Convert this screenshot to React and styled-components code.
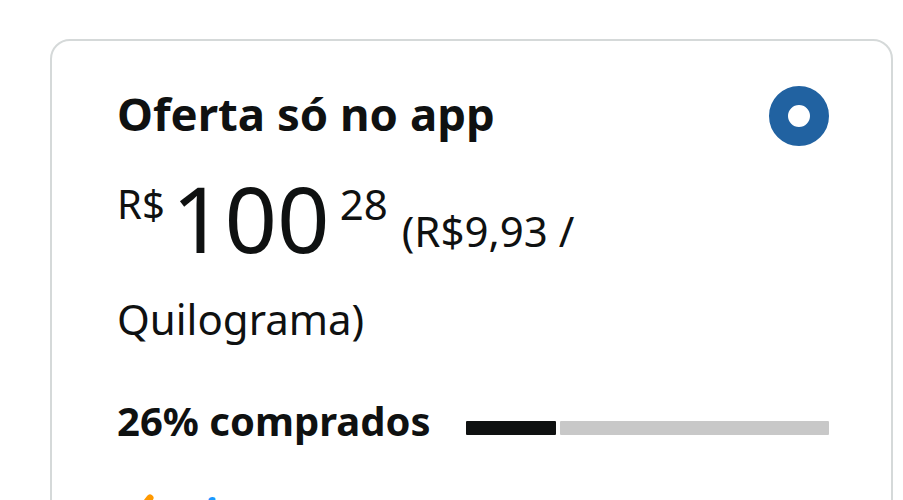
import React from 'react'
import styled, { createGlobalStyle } from 'styled-components'

const Global = createGlobalStyle`
  body {
    margin: 0;
    background: #fff;
    font-family: "Noto Sans", "Open Sans", sans-serif;
    color: #0f1111;
    overflow: hidden;
  }
`

const Page = styled.div`
  padding: 39px 10px 0 50px;
  height: 500px;
  box-sizing: border-box;
`

const Card = styled.div`
  border: 2px solid #d5d9d9;
  border-radius: 20px;
  padding: 39px 62px 0 65px;
  height: 600px;
  box-sizing: border-box;
`

const Header = styled.div`
  display: flex;
  justify-content: space-between;
  align-items: center;
`

const Title = styled.h2`
  margin: 0;
  font-size: 45.5px;
  font-weight: 700;
  line-height: 60px;
`

const Radio = styled.span`
  width: 60px;
  height: 60px;
  margin-top: 6px;
  border-radius: 50%;
  box-sizing: border-box;
  border: 19px solid #2162a1;
  background: #fff;
`

const Price = styled.div`
  max-width: 480px;
  margin-top: 17px;
  font-size: 42px;
  line-height: 82px;
`

const Symbol = styled.span`
  font-size: 40px;
  vertical-align: 34px;
  margin-right: 7px;
`

const Whole = styled.span`
  font-size: 92px;
  line-height: 92px;
`

const Cents = styled.span`
  font-size: 42px;
  vertical-align: 33px;
  margin: 0 14px 0 10px;
`

const Unit = styled.span`
  font-size: 42px;
  vertical-align: 6px;
`

const Claimed = styled.div`
  display: flex;
  align-items: center;
  gap: 35px;
  margin-top: 31px;
`

const ClaimedLabel = styled.span`
  font-size: 40px;
  font-weight: 700;
  line-height: 48px;
  white-space: nowrap;
`

const Track = styled.div`
  flex: 1;
  display: flex;
  gap: 4px;
  height: 14px;
  margin-top: 14px;
`

const Fill = styled.div`
  background: #0f1111;
  border-radius: 1px;
`

const Rest = styled.div`
  flex: 1;
  background: #c8c8c8;
  border-radius: 1px;
`

const Prime = styled.div`
  margin-top: 46px;
  display: flex;
  align-items: flex-start;
  gap: 4px;
  font-size: 42px;
  font-weight: 700;
  color: #1a98ff;
  font-style: italic;
  line-height: 1;

  svg {
    margin-top: 3px;
  }
`

const pct = 25

export default function App() {
  return (
    <Page>
      <Global />
      <Card>
        <Header>
          <Title>Oferta só no app</Title>
          <Radio />
        </Header>
        <Price>
          <Symbol>R$</Symbol>
          <Whole>100</Whole>
          <Cents>28</Cents>
          <Unit>(R$9,93 / Quilograma)</Unit>
        </Price>
        <Claimed>
          <ClaimedLabel>26% comprados</ClaimedLabel>
          <Track>
            <Fill style={{ width: `${pct}%` }} />
            <Rest />
          </Track>
        </Claimed>
        <Prime>
          <svg width="38" height="34" viewBox="0 0 38 34">
            <path d="M4 18 L14 28 L33 4" fill="none" stroke="#ff9900" strokeWidth="7" strokeLinecap="round" />
          </svg>
          <span>prime</span>
        </Prime>
      </Card>
    </Page>
  )
}
